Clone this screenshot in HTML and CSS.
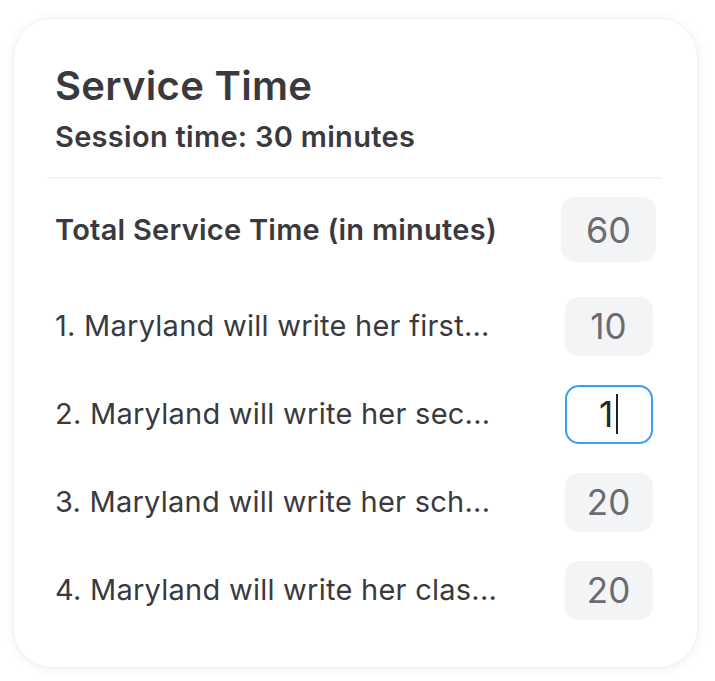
FILE: index.html
```html
<!DOCTYPE html>
<html>
<head>
<meta charset="utf-8">
<link rel="stylesheet" href="styles.css">
</head>
<body>
<div class="card">
  <div class="header">
    <h1 class="title">Service Time</h1>
    <p class="subtitle">Session time: 30 minutes</p>
  </div>
  <div class="divider"></div>
  <div class="rows">
    <div class="row row-total">
      <span class="label label-bold">Total Service Time (in minutes)</span>
      <div class="cell"><span class="box box-wide">60</span></div>
    </div>
    <div class="row">
      <span class="label">1. Maryland will write her first...</span>
      <div class="cell"><span class="box">10</span></div>
    </div>
    <div class="row">
      <span class="label">2. Maryland will write her sec...</span>
      <div class="cell"><span class="box box-focus">1<span class="caret"></span></span></div>
    </div>
    <div class="row">
      <span class="label">3. Maryland will write her sch...</span>
      <div class="cell"><span class="box">20</span></div>
    </div>
    <div class="row">
      <span class="label">4. Maryland will write her clas...</span>
      <div class="cell"><span class="box">20</span></div>
    </div>
  </div>
</div>
</body>
</html>
```

FILE: styles.css
```css
* { box-sizing: border-box; }
html, body { margin: 0; padding: 0; background: #ffffff; }
body {
  font-family: Inter, "Noto Sans", sans-serif;
  color: #3f3f46;
  padding: 19px 18px 14px 14px;
}
.card {
  width: 683px;
  height: 648px;
  background: #ffffff;
  border-radius: 38px;
  box-shadow: 0 0 0 1px rgba(0,0,0,0.02), 0 1px 12px rgba(0,0,0,0.08);
  padding: 44px 35px 0 33px;
}
.header { padding-left: 8px; }
.title {
  margin: 0;
  font-size: 40px;
  line-height: 46px;
  font-weight: 600;
  letter-spacing: 0.3px;
  color: #3a3a3e;
}
.subtitle {
  margin: 10px 0 0 0;
  font-size: 29px;
  line-height: 36px;
  font-weight: 600;
  letter-spacing: 0.3px;
  color: #3a3a3e;
}
.divider {
  height: 2px;
  background: #f3f4f6;
  margin-top: 22px;
}
.rows {
  display: flex;
  flex-direction: column;
  padding: 18px 6px 0 8px;
}
.row {
  display: flex;
  align-items: center;
  justify-content: space-between;
  height: 88px;
}
.row-total { height: 65px; margin-bottom: 20px; }
.label {
  font-size: 29px;
  line-height: 36px;
  font-weight: 400;
  letter-spacing: 0.25px;
  color: #3a3a3e;
  white-space: nowrap;
}
.label-bold { font-weight: 600; }
.cell {
  width: 95px;
  display: flex;
  justify-content: center;
}
.box {
  width: 88px;
  height: 59px;
  border-radius: 14px;
  background: #f3f4f6;
  color: #6b6b70;
  font-size: 35px;
  display: flex;
  align-items: center;
  justify-content: center;
}
.box-wide { width: 95px; height: 65px; font-size: 36px; }
.box-focus {
  background: #ffffff;
  border: 2px solid #3f9cf5;
  color: #27272a;
}
.caret {
  display: inline-block;
  width: 2px;
  height: 40px;
  background: #1f1f23;
  margin-left: 3px;
}
```
